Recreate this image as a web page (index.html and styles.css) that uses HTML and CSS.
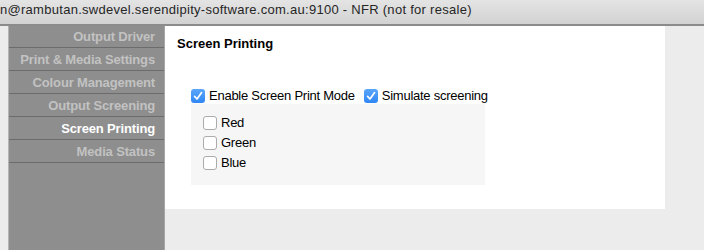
FILE: index.html
```html
<!DOCTYPE html>
<html>
<head>
<meta charset="utf-8">
<link rel="stylesheet" href="styles.css">
</head>
<body>
<div class="titlebar">n@rambutan.swdevel.serendipity-software.com.au:9100 - NFR (not for resale)</div>
<div class="main">
  <nav class="sidebar">
    <div class="item">Output Driver</div>
    <div class="item">Print &amp; Media Settings</div>
    <div class="item">Colour Management</div>
    <div class="item">Output Screening</div>
    <div class="item active">Screen Printing</div>
    <div class="item">Media Status</div>
  </nav>
  <section class="panel">
    <h1 class="heading">Screen Printing</h1>
    <div class="options">
      <label class="check"><span class="box checked"><svg viewBox="0 0 14 14" width="14" height="14"><path d="M3.6 7.4 L6 10 L10.6 3.6" fill="none" stroke="#fff" stroke-width="1.7" stroke-linecap="round" stroke-linejoin="round"/></svg></span><span class="label">Enable Screen Print Mode</span></label>
      <label class="check"><span class="box checked"><svg viewBox="0 0 14 14" width="14" height="14"><path d="M3.6 7.4 L6 10 L10.6 3.6" fill="none" stroke="#fff" stroke-width="1.7" stroke-linecap="round" stroke-linejoin="round"/></svg></span><span class="label">Simulate screening</span></label>
    </div>
    <div class="group">
      <label class="check small"><span class="box"></span><span class="label">Red</span></label>
      <label class="check small"><span class="box"></span><span class="label">Green</span></label>
      <label class="check small"><span class="box"></span><span class="label">Blue</span></label>
    </div>
  </section>
</div>
</body>
</html>
```
FILE: styles.css
```css
html, body {
  margin: 0;
  padding: 0;
}
body {
  width: 704px;
  height: 250px;
  overflow: hidden;
  background: #ececec;
  font-family: "Liberation Sans", Arial, sans-serif;
  font-size: 13px;
  color: #000;
}
.titlebar {
  height: 26px;
  box-sizing: border-box;
  padding-top: 2px;
  line-height: 16px;
  background: linear-gradient(#e4e4e4, #d2d2d2);
  border-bottom: 2px solid #8b8b8b;
  color: #262626;
  letter-spacing: 0.28px;
  white-space: nowrap;
  overflow: hidden;
}
.main {
  display: flex;
  align-items: flex-start;
  height: 224px;
}
.sidebar {
  margin-left: 8px;
  width: 155px;
  height: 224px;
  background: #8e8e8e;
  border-left: 1px solid #b4b4b4;
  border-right: 1px solid #a6a6a6;
  flex: none;
}
.item {
  box-sizing: border-box;
  height: 23px;
  padding-top: 1px;
  line-height: 21px;
  border-bottom: 1px solid #6c6c6c;
  text-align: right;
  padding-right: 9px;
  font-weight: bold;
  letter-spacing: -0.15px;
  color: #c2c2c2;
  white-space: nowrap;
}
.item:first-child {
  height: 22px;
  padding-top: 0;
}
.item.active {
  color: #ffffff;
}
.panel {
  width: 500px;
  height: 183px;
  background: #ffffff;
  box-sizing: border-box;
  padding: 10px 0 0 12px;
  flex: none;
}
.heading {
  margin: 0;
  font-size: 13px;
  font-weight: bold;
  line-height: 16px;
}
.options {
  display: flex;
  gap: 9px;
  margin-top: 35px;
  margin-left: 14px;
  height: 17px;
  align-items: center;
}
.check {
  display: flex;
  align-items: center;
  gap: 4px;
  white-space: nowrap;
}
.label {
  letter-spacing: -0.25px;
}
.box {
  width: 14px;
  height: 14px;
  box-sizing: border-box;
  border-radius: 3px;
  border: 1px solid #ababab;
  background: #fff;
  display: block;
  flex: none;
}
.box.checked {
  border: none;
  background: linear-gradient(#5aa6fb, #2f86f4);
}
.box svg {
  display: block;
}
.group {
  margin-left: 14px;
  width: 294px;
  height: 81px;
  box-sizing: border-box;
  background: #f6f6f6;
  padding: 11px 0 0 12px;
  display: flex;
  flex-direction: column;
  gap: 5px;
}
.check.small {
  height: 15px;
  gap: 4px;
}
```
